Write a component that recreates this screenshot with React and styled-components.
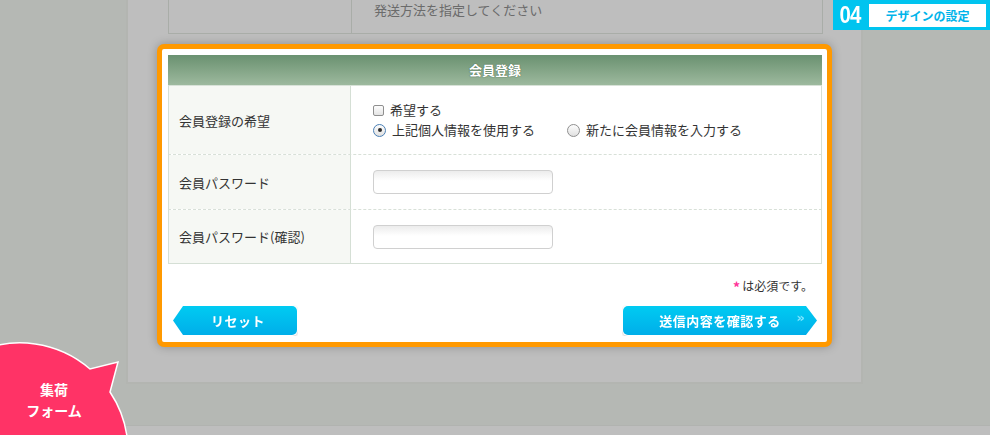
import React from "react";
import styled, { createGlobalStyle } from "styled-components";

const Global = createGlobalStyle`
    html, body {
        margin: 0;
        padding: 0;
        overflow: hidden;
        background: #b5b8b4;
        font-family: "Noto Sans CJK JP", "Noto Sans", sans-serif;
    }
`

const Page = styled.div`
    position: relative;
    width: 990px;
    height: 435px;
    overflow: hidden;
    display: flex;
    flex-direction: column;
`

const Panel = styled.section`
    flex: none;
    box-sizing: border-box;
    width: 737px;
    height: 384px;
    margin-left: 126px;
    padding: 0 29px;
    background: #bebebe;
    border: 2px solid #b3b5b1;
    border-top: none;
`

const PrevTable = styled.div`
    display: flex;
    height: 34px;
    margin: 0 9px 0 11px;
    border: 1px solid #a9ada8;
    border-top: none;
    box-sizing: border-box;
`

const PrevLabel = styled.div`
    width: 182px;
    border-right: 1px solid #a9ada8;
`

const PrevNote = styled.div`
    padding: 1px 0 0 22px;
    font-size: 13px;
    color: #6b6b6b;
    line-height: 18px;
`

const OrangeBox = styled.div`
    margin-top: 10px;
    border: 5px solid #ff9900;
    border-radius: 7px;
    background: #fff;
    padding: 6px 5px 6px 6px;
    box-shadow: 0 0 10px rgba(0, 0, 0, 0.25);
`

const Header = styled.div`
    height: 30px;
    background: linear-gradient(#6a9170, #9db99e);
    color: #fff;
    font-size: 13px;
    font-weight: bold;
    line-height: 30px;
    text-align: center;
    text-shadow: 0 0 1px #4f6f52, 0 0 1px #4f6f52;
    border-bottom: 1px solid #d8e2d8;
`

const Row = styled.div`
    display: flex;
    height: ${p => p.h}px;
    border-left: 1px solid #d5dfd5;
    border-right: 1px solid #d5dfd5;
    border-bottom: ${p => p.last ? "1px solid #d5dfd5" : "1px dashed #d8e0d8"};
`

const Label = styled.div`
    width: 182px;
    flex: none;
    display: flex;
    align-items: center;
    padding-left: 10px;
    box-sizing: border-box;
    background: #f6f8f4;
    border-right: 1px solid #d5dfd5;
    font-size: 13px;
    color: #333;
`

const Field = styled.div`
    flex: 1;
    display: flex;
    flex-direction: column;
    justify-content: center;
    gap: 2px;
    padding-left: 22px;
    font-size: 13px;
    color: #333;
`

const Options = styled.div`
    display: flex;
    align-items: center;
    gap: 32px;
`

const Option = styled.label`
    display: flex;
    align-items: center;
    gap: 6px;
    line-height: 18px;
`

const Check = styled.span`
    width: 11px;
    height: 11px;
    box-sizing: border-box;
    border: 1px solid #8f8f8f;
    border-radius: 2px;
    background: linear-gradient(#fdfdfd, #e4e4e4);
`

const Radio = styled.span`
    position: relative;
    width: 13px;
    height: 13px;
    box-sizing: border-box;
    border-radius: 50%;
    border: 1px solid ${p => p.on ? "#4a7fb5" : "#8f8f8f"};
    background: linear-gradient(#fdfdfd, #e0e0e0);
    &::after {
        content: "";
        display: ${p => p.on ? "block" : "none"};
        position: absolute;
        left: 3.5px;
        top: 3.5px;
        width: 4px;
        height: 4px;
        border-radius: 50%;
        background: #2b2b2b;
    }
`

const TextInput = styled.input`
    width: 180px;
    height: 24px;
    box-sizing: border-box;
    border: 1px solid #d0d0d0;
    border-radius: 4px;
    background: linear-gradient(#ececec, #fff 45%);
    outline: none;
`

const Note = styled.div`
    display: flex;
    justify-content: flex-end;
    align-items: center;
    gap: 2px;
    height: 41px;
    padding: 2px 9px 0 0;
    box-sizing: border-box;
    font-size: 12px;
    color: #333;
`

const Star = styled.span`
    color: #ff3399;
    font-size: 14px;
    font-weight: bold;
    line-height: 12px;
    margin-top: 3px;
`

const Buttons = styled.div`
    display: flex;
    justify-content: space-between;
    padding: 0 4px 0 4px;
`

const BtnEdge = styled.div`
    width: ${p => p.w}px;
    height: 31px;
    padding: 1px;
    box-sizing: border-box;
    background: #fff;
    border-radius: ${p => p.dir === "left" ? "0 6px 6px 0" : "6px 0 0 6px"};
    clip-path: ${p => p.dir === "left"
        ? "polygon(11px 0, 100% 0, 100% 100%, 11px 100%, 0 50%)"
        : "polygon(0 0, calc(100% - 12px) 0, 100% 50%, calc(100% - 12px) 100%, 0 100%)"};
    filter: drop-shadow(0 1px 1px rgba(0,0,0,0.2));
`

const BtnFace = styled.button`
    position: relative;
    width: 100%;
    height: 100%;
    border: none;
    padding: 0;
    background: linear-gradient(#00cbf2, #00aee9);
    border-radius: ${p => p.dir === "left" ? "0 5px 5px 0" : "5px 0 0 5px"};
    clip-path: ${p => p.dir === "left"
        ? "polygon(10px 0, 100% 0, 100% 100%, 10px 100%, 0 50%)"
        : "polygon(0 0, calc(100% - 11px) 0, 100% 50%, calc(100% - 11px) 100%, 0 100%)"};
    color: #fff;
    font-family: "Noto Sans CJK JP", sans-serif;
    font-size: 13px;
    font-weight: bold;
    letter-spacing: 0.5px;
    text-align: center;
    padding-left: ${p => p.dir === "left" ? "6px" : "0"};
`

const Chevron = styled.span`
    position: absolute;
    right: 13px;
    top: 4px;
    font-family: "DejaVu Sans", sans-serif;
    font-size: 13px;
    font-weight: bold;
    color: #7fe6ff;
    letter-spacing: -1px;
`

const Footer = styled.div`
    flex: none;
    margin-top: 41px;
    height: 12px;
    background: #bebebe;
    border-top: 1px solid #b1b3b0;
`

const Badge = styled.div`
    position: absolute;
    top: 0;
    right: 0;
    width: 157px;
    height: 30px;
    background: #00c4ef;
    display: flex;
    align-items: center;
    gap: 5px;
    padding: 0 4px 0 3px;
    box-sizing: border-box;
`

const BadgeNum = styled.span`
    width: 28px;
    color: #fff;
    font-family: "Liberation Sans Narrow", "Liberation Sans", sans-serif;
    font-size: 24px;
    font-weight: bold;
    letter-spacing: -1px;
    text-align: center;
    transform: scaleX(0.85);
`

const BadgeLabel = styled.span`
    flex: 1;
    height: 23px;
    background: #fff;
    color: #00b4ea;
    font-size: 12px;
    font-weight: bold;
    line-height: 23px;
    text-align: center;
`

const Bubble = styled.div`
    position: absolute;
    left: 0;
    top: 335px;
    width: 140px;
    height: 100px;
`

const BubbleText = styled.div`
    position: absolute;
    left: 24px;
    top: 44px;
    width: 60px;
    color: #fff;
    font-size: 14px;
    font-weight: bold;
    line-height: 21px;
    text-align: center;
`

export default function App(){
    return(
        <Page>
            <Global />
            <Panel>
                <PrevTable>
                    <PrevLabel />
                    <PrevNote>発送方法を指定してください</PrevNote>
                </PrevTable>
                <OrangeBox>
                    <Header>会員登録</Header>
                    <Row h={68}>
                        <Label>会員登録の希望</Label>
                        <Field>
                            <Option><Check />希望する</Option>
                            <Options>
                                <Option><Radio on />上記個人情報を使用する</Option>
                                <Option><Radio />新たに会員情報を入力する</Option>
                            </Options>
                        </Field>
                    </Row>
                    <Row h={54}>
                        <Label>会員パスワード</Label>
                        <Field><TextInput type="password" /></Field>
                    </Row>
                    <Row h={53} last>
                        <Label>会員パスワード(確認)</Label>
                        <Field><TextInput type="password" /></Field>
                    </Row>
                    <Note><Star>*</Star>は必須です。</Note>
                    <Buttons>
                        <BtnEdge w={126} dir="left">
                            <BtnFace dir="left">リセット</BtnFace>
                        </BtnEdge>
                        <BtnEdge w={196} dir="right">
                            <BtnFace dir="right">送信内容を確認する<Chevron>»</Chevron></BtnFace>
                        </BtnEdge>
                    </Buttons>
                </OrangeBox>
            </Panel>
            <Footer />
            <Badge>
                <BadgeNum>04</BadgeNum>
                <BadgeLabel>デザインの設定</BadgeLabel>
            </Badge>
            <Bubble>
                <svg width="140" height="100" viewBox="0 0 140 100">
                    <path d="M-87 115 A107 107 0 0 1 90 34 L118 27 L110 57 A107 107 0 0 1 128 115 L128 130 L-87 130 Z" fill="#ff3366" stroke="#fff" strokeWidth="1.5" />
                </svg>
                <BubbleText>集荷<br />フォーム</BubbleText>
            </Bubble>
        </Page>
    )
}
